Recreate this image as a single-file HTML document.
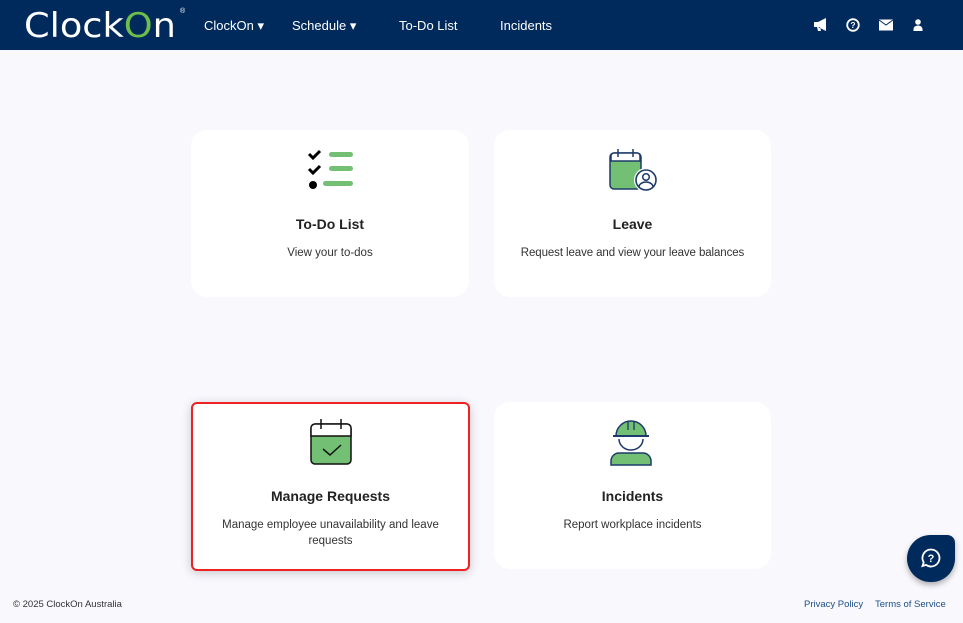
<!DOCTYPE html>
<html><head><style>
*{margin:0;padding:0;box-sizing:border-box}
body{width:963px;height:623px;background:#f8f8fd;font-family:"Liberation Sans",sans-serif;position:relative;overflow:hidden}
.hdr{position:absolute;left:0;top:0;width:963px;height:50px;background:#002a5c;color:#fff}
.logo{position:absolute;left:24px;top:6px;font-size:34px;font-weight:normal;color:#fff;font-family:"DejaVu Sans","Liberation Sans",sans-serif;transform:scaleX(1.08);transform-origin:left}
.nav{position:absolute;top:18px;font-size:13px;color:#fff}
.card{position:absolute;background:#fff;border-radius:16px;text-align:center}
.card h3{position:absolute;left:0;right:0;font-size:14px;font-weight:bold;color:#222}
.card p{position:absolute;left:16px;right:16px;font-size:11.5px;color:#333;line-height:16px}
.foot{position:absolute;top:599px;font-size:9.5px;color:#333}
</style></head><body>
<div class="hdr">
<div class="logo">Clock<span style="color:#6cbf4a">O</span>n</div>
<div style="position:absolute;left:180px;top:8px;font-size:7px">®</div>
<div class="nav" style="left:204px">ClockOn ▾</div>
<div class="nav" style="left:292px">Schedule ▾</div>
<div class="nav" style="left:399px">To-Do List</div>
<div class="nav" style="left:500px">Incidents</div>
<svg style="position:absolute;left:813px;top:17px" width="120" height="16" viewBox="0 0 120 16">
<path d="M1 5h4l8-4v13l-8-4H1z M4 10l1 4h3l-1-4" fill="#fff"/>
<circle cx="40" cy="8" r="5.8" fill="none" stroke="#fff" stroke-width="1.8"/><text x="40" y="11" font-size="8.5" font-weight="bold" fill="#fff" text-anchor="middle" font-family="Liberation Sans">?</text>
<rect x="66" y="2.5" width="14" height="11" fill="#fff"/><path d="M66 3l7 5 7-5" stroke="#002a5c" fill="none"/>
<circle cx="105" cy="5" r="2.8" fill="#fff"/><path d="M100.5 14v-2a4.5 3.5 0 0 1 9 0v2z" fill="#fff"/>
</svg>
</div>

<div class="card" style="left:191px;top:130px;width:278px;height:167px">
<svg style="position:absolute;left:116px;top:19px" width="50" height="42" viewBox="0 0 50 42">
<path d="M2 5l4 4 7-7" stroke="#000" stroke-width="3" fill="none"/><path d="M2 20l4 4 7-7" stroke="#000" stroke-width="3" fill="none"/><circle cx="6" cy="36" r="4" fill="#000"/>
<rect x="22" y="3" width="24" height="5" rx="2.5" fill="#73bf74"/><rect x="22" y="17" width="24" height="5" rx="2.5" fill="#73bf74"/><rect x="16" y="32" width="30" height="5" rx="2.5" fill="#73bf74"/>
</svg>
<h3 style="top:86px">To-Do List</h3><p style="top:115px">View your to-dos</p></div>

<div class="card" style="left:494px;top:130px;width:277px;height:167px">
<svg style="position:absolute;left:114px;top:18px" width="52" height="46" viewBox="0 0 52 46">
<rect x="2" y="5" width="31" height="36" rx="4" fill="#73bf74" stroke="#1d3a6a" stroke-width="1.5"/><path d="M3 13h29V8a3 3 0 0 0-3-3H6a3 3 0 0 0-3 3z" fill="#fff" stroke="#1d3a6a" stroke-width="1.5"/>
<path d="M10 1v8M25 1v8" stroke="#1d3a6a" stroke-width="1.5"/>
<circle cx="38" cy="32" r="12" fill="#fff"/><circle cx="38" cy="32" r="10" fill="none" stroke="#1d3a6a" stroke-width="1.6"/><circle cx="38" cy="29" r="3.3" fill="none" stroke="#1d3a6a" stroke-width="1.5"/><path d="M31 39a7 5 0 0 1 14 0" fill="none" stroke="#1d3a6a" stroke-width="1.5"/>
</svg>
<h3 style="top:86px">Leave</h3><p style="top:115px;left:4px;right:4px;letter-spacing:-0.1px;white-space:nowrap">Request leave and view your leave balances</p></div>

<div class="card" style="left:191px;top:402px;width:279px;height:169px;border:2px solid #e22;border-radius:6px;box-shadow:0 2px 10px rgba(0,0,0,.2)">
<svg style="position:absolute;left:116px;top:14px" width="46" height="50" viewBox="0 0 46 50">
<rect x="2" y="6" width="40" height="40" rx="4" fill="#73bf74" stroke="#111" stroke-width="1.5"/><path d="M2 18h40V10a4 4 0 0 0-4-4H6a4 4 0 0 0-4 4z" fill="#fff" stroke="#111" stroke-width="1.5"/>
<path d="M12 1v10M32 1v10" stroke="#111" stroke-width="1.5"/><path d="M14 31l7 6 11-10" stroke="#111" stroke-width="1.5" fill="none"/>
</svg>
<h3 style="top:84px">Manage Requests</h3><p style="top:113px">Manage employee unavailability and leave requests</p></div>

<div class="card" style="left:494px;top:402px;width:277px;height:167px">
<svg style="position:absolute;left:115px;top:15px" width="46" height="50" viewBox="0 0 46 50">
<path d="M7 19a15 15 0 0 1 30 0z" fill="#73bf74" stroke="#1d3a6a" stroke-width="1.5"/><path d="M4 19h36" stroke="#1d3a6a" stroke-width="2"/><path d="M19 5v8M25 5v8" stroke="#1d3a6a" stroke-width="1.3"/>
<path d="M10 22a12 11 0 0 0 24 0" fill="none" stroke="#1d3a6a" stroke-width="1.5"/>
<path d="M2 48v-4a8 8 0 0 1 8-8h24a8 8 0 0 1 8 8v4z" fill="#73bf74" stroke="#1d3a6a" stroke-width="1.5"/>
</svg>
<h3 style="top:86px">Incidents</h3><p style="top:115px">Report workplace incidents</p></div>

<div class="foot" style="left:13px">© 2025 ClockOn Australia</div>
<div class="foot" style="left:804px;color:#1d4f8a">Privacy Policy</div>
<div class="foot" style="left:875px;color:#1d4f8a">Terms of Service</div>

<div style="position:absolute;left:907px;top:535px;width:48px;height:47px;background:#002a5c;border-radius:24px 8px 24px 24px;box-shadow:0 3px 6px rgba(0,0,0,.3)">
<svg style="position:absolute;left:14px;top:13px" width="20" height="20" viewBox="0 0 20 20"><path d="M10 1.5a8.5 8.5 0 1 1-5 15.4L1.5 18l1.2-3.6A8.5 8.5 0 0 1 10 1.5z" fill="none" stroke="#fff" stroke-width="1.8"/><text x="10" y="14" font-size="11" font-weight="bold" fill="#fff" text-anchor="middle" font-family="Liberation Sans">?</text></svg>
</div>
</body></html>
